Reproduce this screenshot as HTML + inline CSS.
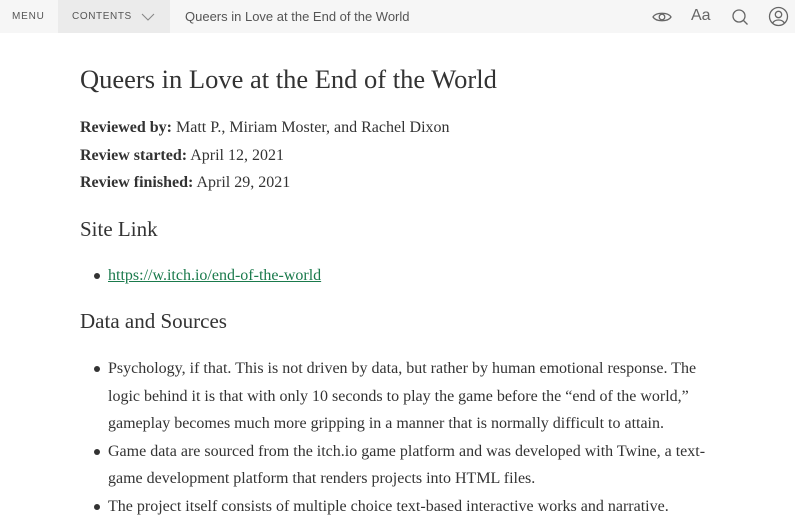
<!DOCTYPE html>
<html><head><meta charset="utf-8"><style>
*{margin:0;padding:0;box-sizing:border-box}
body{width:795px;height:502px;overflow:hidden;background:#fff;font-family:"Liberation Serif",serif;color:#333}
.hdr{position:absolute;top:0;left:0;width:795px;height:33px;background:#f6f6f6;font-family:"Liberation Sans",sans-serif}
.menu{position:absolute;left:12px;top:11px;font-size:10px;letter-spacing:0.8px;color:#555}
.cont{position:absolute;left:58px;top:0;width:112px;height:33px;background:#ebebeb}
.cont span{position:absolute;left:14px;top:11px;font-size:10px;letter-spacing:0.6px;color:#555}
.cont svg{position:absolute;left:83px;top:13px}
.tt{position:absolute;left:185px;top:9px;font-size:13px;color:#555}
.ic{position:absolute;top:7px}
.main{position:absolute;left:80px;top:0;width:650px}
h1{position:absolute;top:64px;font-weight:normal;font-size:26.5px;white-space:nowrap}
.m{position:absolute;font-size:16px;white-space:nowrap}
.m b{font-weight:600}
h2{position:absolute;font-weight:normal;font-size:21px;white-space:nowrap}
ul{position:absolute;left:28px;list-style:none;font-size:16px;line-height:27.5px;width:614px}
li{position:relative}
li:before{content:"";position:absolute;left:-14px;top:11px;width:6px;height:6px;border-radius:50%;background:#333}
a{color:#1a7a4c}
</style></head><body>
<div class="hdr">
<div class="menu">MENU</div>
<div class="cont"><span>CONTENTS</span><svg width="14" height="8" viewBox="0 0 14 8"><path d="M1 1l6 6 6-6" stroke="#888" fill="none" stroke-width="1.1"/></svg></div>
<div class="tt">Queers in Love at the End of the World</div>
<svg class="ic" style="left:652px" width="20" height="20" viewBox="0 0 20 20"><path d="M1 10c3-5 15-5 18 0c-3 5-15 5-18 0z" stroke="#666" fill="none" stroke-width="1.3"/><circle cx="10" cy="10" r="2.8" stroke="#666" fill="none" stroke-width="1.3"/></svg>
<div style="position:absolute;left:691px;top:7px;font-size:16px;color:#666;font-family:'Liberation Sans',sans-serif">Aa</div>
<svg class="ic" style="left:731px" width="20" height="20" viewBox="0 0 20 20"><circle cx="8" cy="9" r="6" stroke="#666" fill="none" stroke-width="1.3"/><path d="M12.5 13.5l4 4" stroke="#666" stroke-width="1.3"/></svg>
<svg class="ic" style="left:768px;top:6px" width="21" height="21" viewBox="0 0 21 21"><circle cx="10.5" cy="10.5" r="9" stroke="#666" fill="none" stroke-width="1.3"/><circle cx="10.5" cy="8.5" r="3.2" stroke="#666" fill="none" stroke-width="1.3"/><path d="M4.8 17c2-4 9.4-4 11.4 0" stroke="#666" fill="none" stroke-width="1.3"/></svg>
</div>
<div class="main">
<h1>Queers in Love at the End of the World</h1>
<div class="m" style="top:119px"><b>Reviewed by:</b> Matt P., Miriam Moster, and Rachel Dixon</div>
<div class="m" style="top:147px"><b>Review started:</b> April 12, 2021</div>
<div class="m" style="top:174px"><b>Review finished:</b> April 29, 2021</div>
<h2 style="top:217px">Site Link</h2>
<ul style="top:262px"><li><a href="#">https://w.itch.io/end-of-the-world</a></li></ul>
<h2 style="top:309px">Data and Sources</h2>
<ul style="top:355px">
<li>Psychology, if that. This is not driven by data, but rather by human emotional response. The logic behind it is that with only 10 seconds to play the game before the “end of the world,” gameplay becomes much more gripping in a manner that is normally difficult to attain.</li>
<li>Game data are sourced from the itch.io game platform and was developed with Twine, a text-game development platform that renders projects into HTML files.</li>
<li>The project itself consists of multiple choice text-based interactive works and narrative.</li>
</ul>
</div>
</body></html>
